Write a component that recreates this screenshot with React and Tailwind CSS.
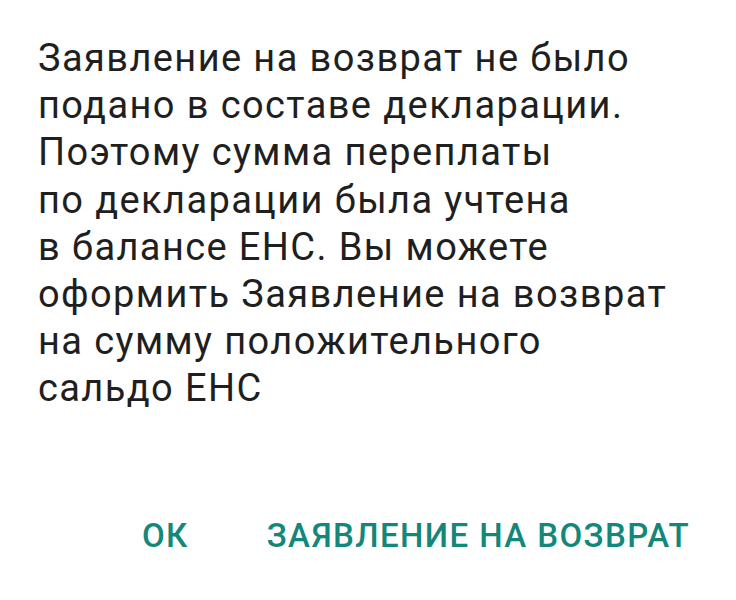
export default function App() {
  return (
    <div className="w-[736px] h-[600px] bg-white flex flex-col" style={{ fontFamily: "Roboto, sans-serif" }}>
      <p className="pl-[38px] pr-2 pt-[35px] text-[38px] leading-[47.2px] tracking-[1.4px] text-[#1f1f1f]">
        Заявление на возврат не было
        <br />
        подано в составе декларации.
        <br />
        Поэтому сумма переплаты
        <br />
        по декларации была учтена
        <br />
        в балансе ЕНС. Вы можете
        <br />
        оформить Заявление на возврат
        <br />
        на сумму положительного
        <br />
        сальдо ЕНС
      </p>
      <div className="mt-auto mb-[44px] flex justify-end items-center gap-[78px] pr-[46px]">
        <button className="text-[33px] leading-[40px] font-medium tracking-[1.4px] text-[#13877a] uppercase">ОК</button>
        <button className="text-[33px] leading-[40px] font-medium tracking-[1.4px] text-[#13877a] uppercase">Заявление на возврат</button>
      </div>
    </div>
  );
}
